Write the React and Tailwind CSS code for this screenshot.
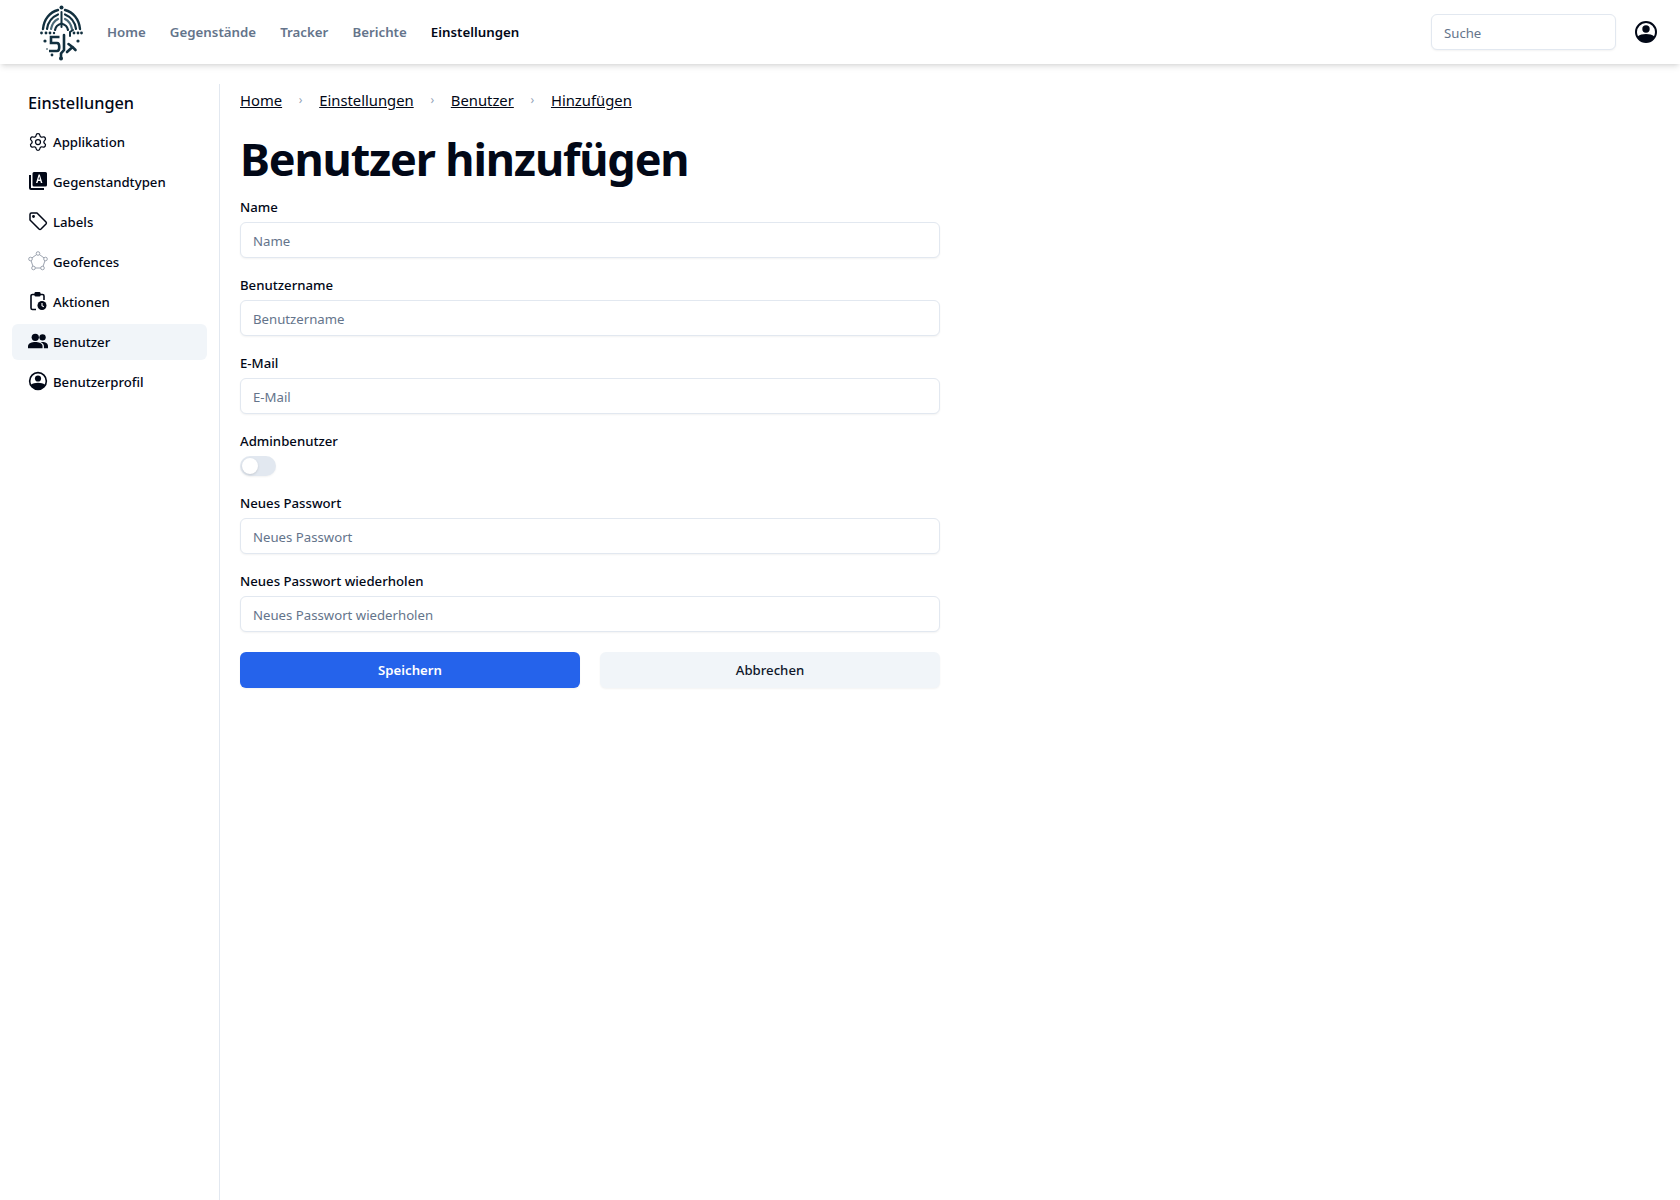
import { Settings } from "lucide-react";

function Logo() {
  return (
    <svg width="43" height="56" viewBox="0 0 43 56" fill="none" stroke="#12303f" strokeLinecap="round" className="mt-0.5">
      <circle cx="21.500" cy="2.500" r="2" fill="#12303f" stroke="none" />
      <path d="M21.500 7v15" strokeWidth="2" />
      <path d="M3 24C4 14 10 7 18 5M40 24C39 14 33 7 25 5" strokeWidth="2.400" />
      <path d="M7 24C8 17 12 12 18 9.500M36 24C35 17 31 12 25 9.500" strokeWidth="2.200" />
      <path d="M11 24C12 19 14 16 18 14M32 24C31 19 29 16 25 14" strokeWidth="2.200" stroke="#4b6a78" />
      <path d="M15 25C15.500 22 18 19.500 21.500 18.500C25 19.500 27.500 22 28 25" strokeWidth="2.200" />
      <path d="M30 31v-4l3-2" strokeWidth="2" />
      <path d="M19.500 32H11v6h6c3 0 3 8 0 8H9" strokeWidth="2.600" strokeLinecap="butt" />
      <path d="M24 30v15l-3 3.500v5" strokeWidth="2.600" />
      <path d="M27 47l5.500-5-4-3M32.500 42l3 3" strokeWidth="2.600" />
      <g fill="#12303f" stroke="none">
        <circle cx="1.500" cy="28" r="1.400" /><circle cx="6" cy="28" r="1.400" /><circle cx="10" cy="28" r="1.400" />
        <circle cx="14" cy="28" r="1.200" /><circle cx="34" cy="28" r="1.400" /><circle cx="38" cy="28" r="1.400" />
        <circle cx="41.500" cy="28" r="1.400" /><circle cx="5" cy="36" r="1.600" /><circle cx="38" cy="36" r="1.600" />
        <circle cx="7" cy="44" r="0.800" /><circle cx="12" cy="50" r="1.400" /><circle cx="21" cy="53.500" r="2" />
      </g>
    </svg>
  );
}

function UserCircle({ size = 20 }) {
  return (
    <svg width={size} height={size} viewBox="0 0 24 24" fill="#020817">
      <path d="M12 1a11 11 0 1 0 0 22 11 11 0 0 0 0-22Zm0 2a9 9 0 0 1 9 9c0 1.500-.4 3-1 4.200-1.500-1.300-4.700-2.200-8-2.200s-6.500.9-8 2.200A9 9 0 0 1 3 12a9 9 0 0 1 9-9Z" />
      <circle cx="12" cy="9" r="3.700" />
    </svg>
  );
}

function TypesIcon() {
  return (
    <svg width="20" height="20" viewBox="0 0 20 20" fill="#020817">
      <path d="M1 4h2v13h13v2H3a2 2 0 0 1-2-2V4Z" />
      <path fillRule="evenodd" d="M6 1h11.500A1.500 1.500 0 0 1 19 2.500V14a1.500 1.500 0 0 1-1.500 1.500H6A1.500 1.500 0 0 1 4.500 14V2.500A1.500 1.500 0 0 1 6 1Zm5.800 2.500h-1.200L8 12h1.500l.6-2h2.200l.6 2h1.500l-2.600-8.500ZM11.200 5.300l.8 3.200h-1.600l.8-3.200Z" />
    </svg>
  );
}

function TagIcon() {
  return (
    <svg width="20" height="20" viewBox="0 0 20 20" fill="none" stroke="#020817" strokeWidth="1.500" strokeLinejoin="round">
      <path d="M2 3.500A1.500 1.500 0 0 1 3.500 2H9l9 9a1.500 1.500 0 0 1 0 2l-5 5a1.500 1.500 0 0 1-2 0L2 9V3.500Z" />
      <circle cx="5.500" cy="5.500" r="0.700" fill="#020817" />
    </svg>
  );
}

function GeofenceIcon() {
  return (
    <svg width="20" height="20" viewBox="0 0 20 20" fill="none" stroke="#9ca3af" strokeWidth="1">
      <path d="M10 2.500 17.500 8 14.500 17h-9L2.500 8Z" />
      <g fill="#fff">
        <circle cx="10" cy="2.500" r="1.800" />
        <circle cx="17.500" cy="8" r="1.800" />
        <circle cx="14.500" cy="17" r="1.800" />
        <circle cx="5.500" cy="17" r="1.800" />
        <circle cx="2.500" cy="8" r="1.800" />
      </g>
    </svg>
  );
}

function ActionsIcon() {
  return (
    <svg width="20" height="20" viewBox="0 0 20 20" fill="none">
      <path d="M8 18.500H4.500A1.500 1.500 0 0 1 3 17V5a1.500 1.500 0 0 1 1.500-1.500h10A1.500 1.500 0 0 1 16 5v4" stroke="#020817" strokeWidth="1.600" />
      <rect x="6.500" y="1" width="6" height="4.500" rx="1.200" fill="#020817" />
      <circle cx="14" cy="14.500" r="4.500" fill="#020817" />
      <path d="M14 12v2.800l1.800 1" stroke="#fff" strokeWidth="1.100" />
    </svg>
  );
}

function UsersIcon() {
  return (
    <svg width="22" height="20" viewBox="0 0 22 20" fill="#020817">
      <circle cx="8" cy="6" r="4" />
      <path d="M0 18v-2.500C0 12.500 4.500 11 8 11s8 1.500 8 4.500V18H0Z" />
      <circle cx="16" cy="6" r="3.500" />
      <path d="M13.500 11.100c.7-.1 1.700-.1 2.500-.1 3 0 6 1.500 6 4.500V18h-4.500v-2.500c0-1.800-1.500-3.400-4-4.400Z" />
    </svg>
  );
}

const topLinks = ["Home", "Gegenstände", "Tracker", "Berichte", "Einstellungen"];

const sideLinks = [
  { label: "Applikation", icon: <Settings size={20} strokeWidth={1.500} color="#020817" /> },
  { label: "Gegenstandtypen", icon: <TypesIcon />, raised: true },
  { label: "Labels", icon: <TagIcon />, raised: true },
  { label: "Geofences", icon: <GeofenceIcon />, raised: true },
  { label: "Aktionen", icon: <ActionsIcon />, raised: true },
  { label: "Benutzer", icon: <UsersIcon />, active: true, raised: true },
  { label: "Benutzerprofil", icon: <UserCircle />, raised: true },
];

const crumbs = ["Home", "Einstellungen", "Benutzer", "Hinzufügen"];

function Field({ label }) {
  return (
    <div>
      <label className="block h-5 text-[13.200px] leading-5 font-medium">{label}</label>
      <input
        placeholder={label}
        className="mt-[5px] block h-9 w-full rounded-md border border-[#e2e8f0] bg-white px-3 pt-0.5 text-[13.200px] shadow-xs outline-none placeholder:text-[#64748b]"
      />
    </div>
  );
}

export default function App() {
  return (
    <div className="min-h-[1200px] bg-white text-[#020817] font-['Noto_Sans','Open_Sans',sans-serif]">
      <header className="flex h-16 items-center bg-white pr-[22px] pl-10 shadow-md">
        <Logo />
        <nav className="ml-6 flex gap-6 pt-px text-[13.300px] font-semibold text-[#64748b]">
          {topLinks.map((link) => (
            <a key={link} className={link === "Einstellungen" ? "text-[#020817]" : ""}>
              {link}
            </a>
          ))}
        </nav>
        <input
          placeholder="Suche"
          className="ml-auto h-9 w-[185px] rounded-md border border-[#e2e8f0] bg-white px-3 pt-0.5 text-[13.200px] shadow-xs outline-none placeholder:text-[#64748b]"
        />
        <div className="ml-[18px]">
          <UserCircle size={24} />
        </div>
      </header>

      <div className="flex pt-5">
        <aside className="h-[1116px] w-[220px] shrink-0 border-r border-[#e2e8f0] px-3">
          <h2 className="mb-2 h-8 pt-[5px] pl-4 text-[16.300px] leading-7 font-medium">Einstellungen</h2>
          <ul className="flex flex-col gap-1">
            {sideLinks.map((item) => (
              <li
                key={item.label}
                className={`flex h-9 items-center gap-[5px] rounded-md pl-4 text-[13.200px] font-medium ${item.active ? "bg-[#f1f5f9]" : ""}`}
              >
                <span className={`flex w-5 justify-center ${item.raised ? "-mt-[3px]" : ""}`}>{item.icon}</span>
                <span className="pt-px">{item.label}</span>
              </li>
            ))}
          </ul>
        </aside>

        <main className="w-[720px] pl-5">
          <nav className="mt-1 flex h-6 items-center text-[14.800px]">
            {crumbs.map((crumb, i) => (
              <span key={crumb} className="flex items-center">
                {i > 0 && <span className="mx-[16.700px] text-xs text-[#94a3b8]">›</span>}
                <a className="underline">{crumb}</a>
              </span>
            ))}
          </nav>
          <h1 className="mt-[23px] text-[45px] leading-[48px] font-bold tracking-[-1.150px]">Benutzer hinzufügen</h1>

          <div className="mt-3.5 flex flex-col gap-[17px]">
            <Field label="Name" />
            <Field label="Benutzername" />
            <Field label="E-Mail" />
            <div>
              <label className="block h-5 text-[13.200px] leading-5 font-medium">Adminbenutzer</label>
              <div className="mt-[5px] flex h-5 w-9 items-center rounded-full bg-[#e2e8f0] px-0.5 shadow-xs">
                <span className="size-4 rounded-full bg-white shadow" />
              </div>
            </div>
            <Field label="Neues Passwort" />
            <Field label="Neues Passwort wiederholen" />
          </div>

          <div className="mt-5 flex gap-5">
            <button className="h-9 flex-1 rounded-md bg-[#2563eb] pt-0.5 text-[13.200px] font-semibold text-white shadow-xs">
              Speichern
            </button>
            <button className="h-9 flex-1 rounded-md bg-[#f1f5f9] pt-0.5 text-[13.200px] font-medium text-[#0f172a] shadow-xs">
              Abbrechen
            </button>
          </div>
        </main>
      </div>
    </div>
  );
}
